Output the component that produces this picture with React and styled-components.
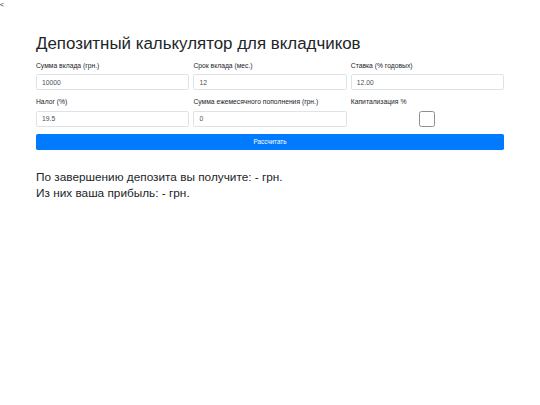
import React, { useState } from "react";
import styled, { createGlobalStyle } from "styled-components";

const GlobalStyle = createGlobalStyle`
  html, body {
    margin: 0;
    padding: 0;
    background: #fff;
  }
  body {
    font-family: "Liberation Sans", Arial, sans-serif;
    font-size: 6.75px;
    line-height: 1.5;
    color: #212529;
  }
  * {
    box-sizing: border-box;
  }
`;

const BackLink = styled.a`
  display: block;
  color: #212529;
  text-decoration: none;
  font-size: 6.75px;
  line-height: 10.1px;
`;

const Container = styled.div`
  width: 468px;
  margin: 23.5px auto 0;
`;

const Title = styled.h1`
  margin: 0 0 3.4px;
  font-size: 16.9px;
  font-weight: 400;
  line-height: 1.2;
`;

const Form = styled.form`
  margin-top: 7.5px;
`;

const FormRow = styled.div`
  display: grid;
  grid-template-columns: repeat(3, 1fr);
  column-gap: 4.2px;
`;

const FormGroup = styled.div`
  display: flex;
  flex-direction: column;
  margin-bottom: 7px;
`;

const Label = styled.label`
  display: block;
  margin-bottom: 3px;
  font-size: 6.75px;
  line-height: 10.1px;
`;

const Input = styled.input`
  width: 100%;
  height: 16px;
  padding: 0 5px;
  font-family: inherit;
  font-size: 6.75px;
  color: #495057;
  background: #fff;
  border: 1px solid #dfe3e7;
  border-radius: 1.7px;
  outline: none;
`;

const CheckWrap = styled.div`
  height: 16px;
  display: flex;
  justify-content: center;
  align-items: center;
`;

const Check = styled.input`
  appearance: none;
  margin: 0;
  width: 16px;
  height: 16px;
  border: 1px solid #8a8f94;
  border-radius: 2.5px;
  background: #fff;
  &:checked {
    background: #007bff;
    border-color: #007bff;
  }
`;

const Button = styled.button`
  display: block;
  width: 100%;
  height: 16px;
  padding: 0;
  font-family: inherit;
  font-size: 6.3px;
  color: #fff;
  background: #007bff;
  border: none;
  border-radius: 1.7px;
  cursor: pointer;
`;

const Results = styled.div`
  margin-top: 19px;
`;

const ResultLine = styled.p`
  margin: 0;
  font-size: 11.8px;
  line-height: 16.5px;
`;

const fields = [
  [
    { label: "Сумма вклада (грн.)", value: "10000" },
    { label: "Срок вклада (мес.)", value: "12" },
    { label: "Ставка (% годовых)", value: "12.00" },
  ],
  [
    { label: "Налог (%)", value: "19.5" },
    { label: "Сумма ежемесячного пополнения (грн.)", value: "0" },
  ],
];

export default function App() {
  const [capitalize, setCapitalize] = useState(false);

  return (
    <>
      <GlobalStyle />
      <BackLink href="#">&lt;</BackLink>
      <Container>
        <Title>Депозитный калькулятор для вкладчиков</Title>
        <Form onSubmit={(e) => e.preventDefault()}>
          {fields.map((row, i) => (
            <FormRow key={i}>
              {row.map((f) => (
                <FormGroup key={f.label}>
                  <Label>{f.label}</Label>
                  <Input type="text" defaultValue={f.value} />
                </FormGroup>
              ))}
              {i === 1 && (
                <FormGroup>
                  <Label>Капитализация %</Label>
                  <CheckWrap>
                    <Check
                      type="checkbox"
                      checked={capitalize}
                      onChange={(e) => setCapitalize(e.target.checked)}
                    />
                  </CheckWrap>
                </FormGroup>
              )}
            </FormRow>
          ))}
          <Button type="submit">Рассчитать</Button>
        </Form>
        <Results>
          <ResultLine>По завершению депозита вы получите: - грн.</ResultLine>
          <ResultLine>Из них ваша прибыль: - грн.</ResultLine>
        </Results>
      </Container>
    </>
  );
}
